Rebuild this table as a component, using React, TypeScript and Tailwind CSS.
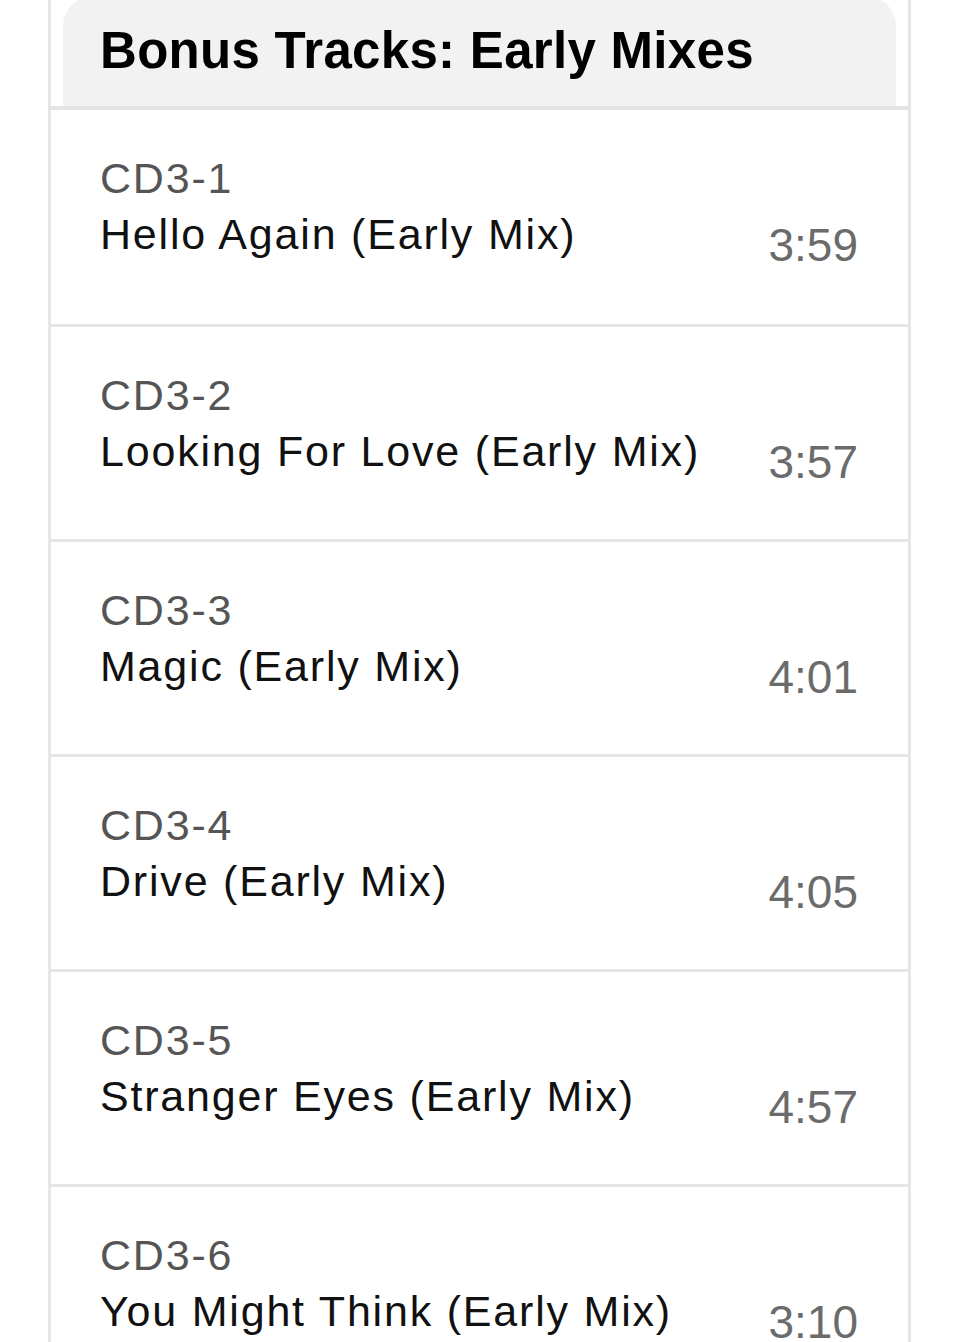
type Track = {
  id: string;
  title: string;
  length: string;
};

const tracks: Track[] = [
  { id: "CD3-1", title: "Hello Again (Early Mix)", length: "3:59" },
  { id: "CD3-2", title: "Looking For Love (Early Mix)", length: "3:57" },
  { id: "CD3-3", title: "Magic (Early Mix)", length: "4:01" },
  { id: "CD3-4", title: "Drive (Early Mix)", length: "4:05" },
  { id: "CD3-5", title: "Stranger Eyes (Early Mix)", length: "4:57" },
  { id: "CD3-6", title: "You Might Think (Early Mix)", length: "3:10" },
];

export default function App() {
  return (
    <div
      className="h-[1342px] overflow-hidden bg-white"
      style={{ fontFamily: '"Liberation Sans", Arial, sans-serif' }}
    >
      <div className="ml-[48px] w-[863px] min-h-full border-x-[3px] border-[#e6e6e6]">
        {/* section header */}
        <div className="px-[12px]">
          <div className="-mt-[4px] flex h-[110px] items-center rounded-t-[30px] bg-[#f2f2f2] pl-[37px]">
            <h2 className="text-[51px] font-bold leading-[56px] tracking-[0.3px] text-black">
              Bonus Tracks: Early Mixes
            </h2>
          </div>
        </div>
        <div className="h-[4px] bg-[#e4e4e4]" />

        {tracks.map((track, i) => (
          <div
            key={track.id}
            className={`flex items-start justify-between pl-[49px] pr-[50px] pt-[40px] ${
              i === 0 ? "h-[214px]" : "h-[215px] border-t-[3px] border-[#e6e6e6]"
            }`}
          >
            <div className="whitespace-nowrap text-[43px] leading-[56px] tracking-[1.8px]">
              <p className="text-[#555555]">{track.id}</p>
              <p className="text-[#111111]">{track.title}</p>
            </div>
            <span className="mt-[72px] text-[46px] leading-[46px] text-[#6b6b6b]">
              {track.length}
            </span>
          </div>
        ))}
      </div>
    </div>
  );
}
